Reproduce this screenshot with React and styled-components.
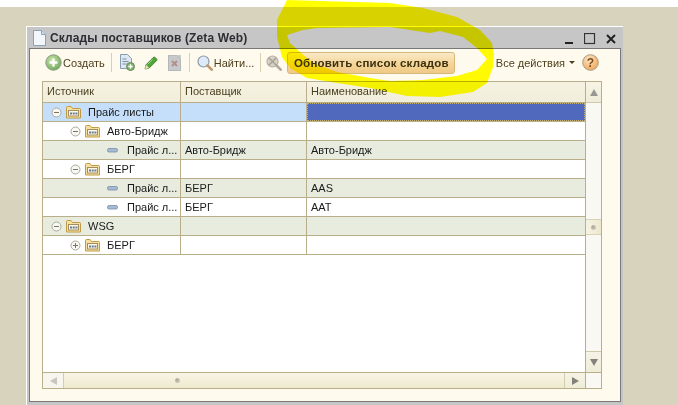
import styled, { createGlobalStyle } from 'styled-components';

const GlobalStyle = createGlobalStyle`
html, body {
    margin: 0;
    padding: 0;
    background: #fff;
}
`

const rows = [
    { level: 0, toggle: 'minus', name: 'Прайс листы', selected: true },
    { level: 1, toggle: 'minus', name: 'Авто-Бридж' },
    { level: 2, name: 'Прайс л...', supplier: 'Авто-Бридж', title: 'Авто-Бридж', alt: true },
    { level: 1, toggle: 'minus', name: 'БЕРГ' },
    { level: 2, name: 'Прайс л...', supplier: 'БЕРГ', title: 'AAS', alt: true },
    { level: 2, name: 'Прайс л...', supplier: 'БЕРГ', title: 'AAT' },
    { level: 0, toggle: 'minus', name: 'WSG', alt: true },
    { level: 1, toggle: 'plus', name: 'БЕРГ' },
]

function Toggle({ kind }) {
    return (
        <svg width="11" height="11" viewBox="0 0 11 11">
            <circle cx="5.5" cy="5.5" r="4.5" fill="#f8f7f2" stroke="#aaaaa0" />
            <path d="M3 5.5h5" stroke="#77776c" />
            {kind === 'plus' && <path d="M5.5 3v5" stroke="#77776c" />}
        </svg>
    )
}

function Folder() {
    return (
        <svg width="15" height="13" viewBox="0 0 15 13">
            <path d="M.5 12V1.5q0-1 1-1h3.5l1.5 2h7q1 0 1 1V12z" fill="#f7dfa0" stroke="#c09a45" />
            <rect x="2.5" y="4.5" width="10" height="5.5" fill="#fdf8e4" stroke="#a08f60" />
            <path d="M4 6.5h2v2H4zM6.7 6.5h2v2h-2zM9.4 6.5h2v2h-2z" fill="#6b7a98" />
        </svg>
    )
}

function Dash() {
    return (
        <svg width="11" height="5" viewBox="0 0 11 5">
            <rect x=".5" y=".5" width="10" height="3.5" rx="1.5" fill="#a5bbd4" stroke="#7a8ea8" strokeWidth=".8" />
        </svg>
    )
}

function PlusBall() {
    return (
        <svg width="17" height="17" viewBox="0 0 17 17">
            <defs>
                <radialGradient id="ball" cx=".4" cy=".35" r=".7">
                    <stop offset="0" stopColor="#c9e6a8" />
                    <stop offset="1" stopColor="#6fa65a" />
                </radialGradient>
            </defs>
            <circle cx="8.5" cy="8.5" r="7.7" fill="url(#ball)" stroke="#8b9a80" />
            <path d="M8.5 4.5v8M4.5 8.5h8" stroke="#fff" strokeWidth="2.4" />
        </svg>
    )
}

function DocPlus() {
    return (
        <svg width="16" height="17" viewBox="0 0 16 17">
            <path d="M1.5.5h7l4 4v10h-11z" fill="#dde8f2" stroke="#8a9cb0" />
            <path d="M3.5 5h4M3.5 7.5h6M3.5 10h4" stroke="#7d90a6" />
            <circle cx="11.5" cy="12.5" r="4" fill="#7fb069" stroke="#6b8a5c" />
            <path d="M11.5 10.3v4.4M9.3 12.5h4.4" stroke="#fff" strokeWidth="1.4" />
        </svg>
    )
}

function Pencil() {
    return (
        <svg width="14" height="14" viewBox="0 0 14 14">
            <path d="M1 13l1-4.2L9.5 1.3q.7-.6 1.4 0l1.8 1.8q.6.7 0 1.4L5.2 12z" fill="#4fa53a" stroke="#2f7a25" strokeWidth=".8" />
            <path d="M1 13l1-4.2L5.2 12z" fill="#f3e3b0" />
            <path d="M3.5 8.5l5-5" stroke="#a8dc90" />
        </svg>
    )
}

function DocCross() {
    return (
        <svg width="13" height="16" viewBox="0 0 13 16">
            <rect width="13" height="16" fill="#c9cbcb" />
            <path d="M.5.5h8l4 4v11H.5z" fill="#c6cacc" stroke="#b5b8b8" />
            <path d="M4 6l5 5M9 6l-5 5" stroke="#b58f8a" strokeWidth="2" />
        </svg>
    )
}

function Magnifier({ muted }) {
    const glass = muted ? '#d7d3c8' : '#dcebf7'
    const edge = muted ? '#b5b0a4' : '#8d99a6'
    const handle = muted ? '#b3a99a' : '#c09a6a'
    return (
        <svg width="16" height="16" viewBox="0 0 16 16">
            <circle cx="6.5" cy="6.5" r="5.5" fill={glass} stroke={edge} strokeWidth="1.2" />
            <path d="M10.5 10.5l4.2 4.2" stroke={handle} strokeWidth="2.6" strokeLinecap="round" />
            {muted && <path d="M3 3l7 7M10 3l-7 7" stroke="#a8a296" strokeWidth="1.6" />}
        </svg>
    )
}

function HelpBall() {
    return (
        <svg width="17" height="17" viewBox="0 0 17 17">
            <defs>
                <radialGradient id="help" cx=".4" cy=".3" r=".8">
                    <stop offset="0" stopColor="#fde6c4" />
                    <stop offset="1" stopColor="#eea04e" />
                </radialGradient>
            </defs>
            <circle cx="8.5" cy="8.5" r="7.8" fill="url(#help)" stroke="#a89a86" />
            <text x="8.5" y="12.6" textAnchor="middle" fontSize="12" fontWeight="700" fontFamily="Liberation Sans, sans-serif" fill="#7a4a1c">?</text>
        </svg>
    )
}

function App() {
    return (
        <Page>
            <GlobalStyle />
            <TopStrip />
            <Window>
                <TitleBar>
                    <svg width="13" height="16" viewBox="0 0 13 16">
                        <path d="M.5.5h8l4 4v11H.5z" fill="#f3f7fb" stroke="#8da2b8" />
                        <path d="M8.5.5v4h4" fill="#d5e1ec" stroke="#8da2b8" />
                    </svg>
                    <Title>Склады поставщиков (Zeta Web)</Title>
                    <WindowControls>
                        <svg width="9" height="3" viewBox="0 0 9 3"><rect width="8" height="2" y="1" fill="#222" /></svg>
                        <svg width="12" height="12" viewBox="0 0 12 12"><rect x=".5" y=".5" width="10" height="10" fill="none" stroke="#333" strokeWidth="1.2" /></svg>
                        <svg width="10" height="10" viewBox="0 0 10 10"><path d="M1 1l8 8M9 1l-8 8" stroke="#222" strokeWidth="2" /></svg>
                    </WindowControls>
                </TitleBar>
                <Client>
                    <Toolbar>
                        <ToolGroup>
                            <PlusBall />
                            <ToolLabel>Создать</ToolLabel>
                        </ToolGroup>
                        <Separator />
                        <IconSlot><DocPlus /></IconSlot>
                        <IconSlot><Pencil /></IconSlot>
                        <IconSlot><DocCross /></IconSlot>
                        <Separator />
                        <ToolGroup>
                            <Magnifier />
                            <ToolLabel>Найти...</ToolLabel>
                        </ToolGroup>
                        <Separator $narrow />
                        <IconSlot><Magnifier muted /></IconSlot>
                        <RefreshButton>Обновить список складов</RefreshButton>
                        <Actions>
                            <ToolLabel>Все действия</ToolLabel>
                            <Caret />
                        </Actions>
                        <HelpBall />
                    </Toolbar>
                    <Table>
                        <Body>
                            <HeaderRow>
                                <HeaderCell>Источник</HeaderCell>
                                <HeaderCell>Поставщик</HeaderCell>
                                <HeaderCell $last>Наименование</HeaderCell>
                            </HeaderRow>
                            {rows.map((row, i) => (
                                <Row key={i} $alt={row.alt} $selected={row.selected}>
                                    <TreeCell $level={row.level}>
                                        {row.toggle ? <Toggle kind={row.toggle} /> : <Dash />}
                                        {row.toggle && <Folder />}
                                        <TreeText $leaf={!row.toggle}>{row.name}</TreeText>
                                    </TreeCell>
                                    <Cell>{row.supplier}</Cell>
                                    {row.selected ? <ActiveCell /> : <Cell $last>{row.title}</Cell>}
                                </Row>
                            ))}
                        </Body>
                        <VScroll>
                            <VButton><ArrowUp /></VButton>
                            <VTrack><VThumb><Dot /></VThumb></VTrack>
                            <VButton $down><ArrowDown /></VButton>
                        </VScroll>
                        <HScroll>
                            <HButton><ArrowLeft /></HButton>
                            <HThumb><Dot /></HThumb>
                            <HButton $end><ArrowRight /></HButton>
                        </HScroll>
                        <Corner />
                    </Table>
                </Client>
            </Window>
            <Scribble width="678" height="405" viewBox="0 0 678 405">
                <path
                    fillRule="evenodd"
                    fill="#ffff00"
                    d="M287 0L390 3L423 8L457 17L480 30L492 43L494 55L493 67L487 83L473 92L440 97L407 96L370 88L337 83L307 78L290 68L282 57L277 37L277 20Z
                       M287 35L290 43L300 52L313 63L337 72L370 78L390 81L423 80L457 76L477 70L487 59L477 48L463 37L440 31L430 33L390 27L317 28L303 30Z"
                />
            </Scribble>
        </Page>
    )
}

export default App

const Page = styled.div`
position: relative;
width: 678px;
height: 405px;
overflow: hidden;
background: #d8d3bc;
font-family: "Liberation Sans", Arial, sans-serif;
font-size: 11px;
`

const TopStrip = styled.div`
height: 7px;
background: #fff;
`

const Scribble = styled.svg`
position: absolute;
left: 0;
top: 0;
mix-blend-mode: multiply;
pointer-events: none;
`

const Window = styled.div`
box-sizing: border-box;
width: 597px;
height: 379px;
margin: 19px 0 0 26px;
padding: 0 2px 3px;
background: #c6c6c6;
border-top: 1px solid #fff;
border-left: 1px solid #fff;
display: flex;
flex-direction: column;
`

const TitleBar = styled.div`
height: 21px;
flex: none;
display: flex;
align-items: center;
padding-left: 4px;
`

const Title = styled.div`
margin-left: 4px;
font-size: 12px;
font-weight: bold;
letter-spacing: .12px;
color: #2d2d33;
`

const WindowControls = styled.div`
margin-left: auto;
display: flex;
align-items: center;
gap: 10px;
padding: 3px 5px 0 0;
& > svg:first-child { margin-top: 7px; }
`

const Client = styled.div`
box-sizing: border-box;
flex: 1;
background: #fffaee;
border: 1px solid #787878;
padding: 0 18px 12px 12px;
display: flex;
flex-direction: column;
`

const Toolbar = styled.div`
height: 32px;
flex: none;
display: flex;
align-items: center;
padding: 0 3px 5px 0;
box-sizing: border-box;
`

const ToolGroup = styled.div`
display: flex;
align-items: center;
gap: 1px;
padding-left: 3px;
margin-right: 5px;
`

const ToolLabel = styled.span`
color: #4d3f1c;
font-size: 11px;
`

const IconSlot = styled.div`
display: flex;
justify-content: center;
width: 22px;
margin-right: 2px;
`

const Separator = styled.div`
width: 1px;
height: 19px;
background: #d9d0b0;
margin: 0 ${p => (p.$narrow ? 2 : 4)}px 0 1px;
`

const RefreshButton = styled.div`
box-sizing: border-box;
width: 168px;
height: 22px;
border: 1px solid #d8b878;
border-radius: 3px;
background: linear-gradient(#fbe9c8, #f4d598 55%, #efc987);
display: flex;
align-items: center;
justify-content: center;
font-weight: bold;
font-size: 11.5px;
letter-spacing: .2px;
color: #3c3010;
`

const Actions = styled.div`
margin-left: auto;
display: flex;
align-items: center;
gap: 4px;
margin-right: 7px;
`

const Caret = styled.div`
width: 0;
height: 0;
border-left: 3px solid transparent;
border-right: 3px solid transparent;
border-top: 3px solid #4d3f1c;
`

const Table = styled.div`
box-sizing: border-box;
width: 560px;
flex: 1;
border: 1px solid #b8ae8a;
background: #fff;
display: grid;
grid-template-columns: 542px 1fr;
grid-template-rows: 1fr 16px;
`

const Body = styled.div`
min-width: 0;
`

const columns = `
display: grid;
grid-template-columns: 138px 126px 1fr;
box-sizing: border-box;
`

const HeaderRow = styled.div`
${columns}
height: 21px;
background: linear-gradient(#f5f2e2, #f1eedb);
border-bottom: 1px solid #b8ae8a;
`

const HeaderCell = styled.div`
box-sizing: border-box;
padding-left: 4px;
line-height: 19px;
color: #4a3f1e;
border-right: ${p => (p.$last ? 'none' : '1px solid #b8ae8a')};
`

const Row = styled.div`
${columns}
height: 19px;
border-bottom: 1px solid #b8ae8a;
color: #1a1a1a;
background: ${p => (p.$selected ? '#c5dffa' : p.$alt ? '#e8ecdf' : '#fff')};
`

const Cell = styled.div`
box-sizing: border-box;
padding-left: 4px;
line-height: 18px;
white-space: nowrap;
overflow: hidden;
border-right: ${p => (p.$last ? 'none' : '1px solid #b8ae8a')};
`

const ActiveCell = styled.div`
background: #5069bd;
outline: 1px dotted #c4b070;
outline-offset: -1px;
`

const TreeCell = styled.div`
box-sizing: border-box;
display: flex;
align-items: center;
gap: 4px;
min-width: 0;
padding-left: ${p => (p.$level === 2 ? 64 : 8 + p.$level * 19)}px;
border-right: 1px solid #b8ae8a;
padding-right: 3px;
& > svg { flex: none; }
`

const TreeText = styled.span`
margin-left: ${p => (p.$leaf ? 5 : 3)}px;
min-width: 0;
white-space: nowrap;
`

const VScroll = styled.div`
grid-row: 1;
grid-column: 2;
border-left: 1px solid #b8ae8a;
background: #f9f8f3;
display: flex;
flex-direction: column;
`

const scrollButton = `
box-sizing: border-box;
flex: none;
display: flex;
align-items: center;
justify-content: center;
background: linear-gradient(#f7f4e6, #efecd8);
`

const VButton = styled.div`
${scrollButton}
height: 21px;
border-${p => (p.$down ? 'top' : 'bottom')}: 1px solid #cfc8aa;
`

const VTrack = styled.div`
flex: 1;
padding-top: 116px;
`

const VThumb = styled.div`
${scrollButton}
height: 16px;
background: linear-gradient(90deg, #f6f3e2, #ece8cf);
border-top: 1px solid #d8d2b8;
border-bottom: 1px solid #d8d2b8;
`

const HScroll = styled.div`
grid-row: 2;
grid-column: 1;
border-top: 1px solid #b8ae8a;
display: flex;
background: #f9f8f3;
`

const HButton = styled.div`
${scrollButton}
width: 21px;
background: ${p => (p.$end ? 'linear-gradient(#f7f4e6, #efecd8)' : '#f7f6ee')};
border-${p => (p.$end ? 'left' : 'right')}: 1px solid #d3ccb0;
`

const HThumb = styled.div`
${scrollButton}
flex: 1;
padding-right: 274px;
background: linear-gradient(#f7f5e6, #efeacd);
`

const Corner = styled.div`
grid-row: 2;
grid-column: 2;
border-top: 1px solid #b8ae8a;
border-left: 1px solid #b8ae8a;
background: #f9f8f3;
`

const Dot = styled.div`
width: 5px;
height: 5px;
border-radius: 50%;
background: radial-gradient(circle at 35% 35%, #aaa79a, #dbd8c8);
`

const ArrowUp = styled.div`
width: 0;
height: 0;
border-left: 4px solid transparent;
border-right: 4px solid transparent;
border-bottom: 7px solid #999791;
`

const ArrowDown = styled.div`
width: 0;
height: 0;
border-left: 4px solid transparent;
border-right: 4px solid transparent;
border-top: 7px solid #84827c;
`

const ArrowLeft = styled.div`
width: 0;
height: 0;
border-top: 4px solid transparent;
border-bottom: 4px solid transparent;
border-right: 7px solid #c9c7bb;
`

const ArrowRight = styled.div`
width: 0;
height: 0;
border-top: 4px solid transparent;
border-bottom: 4px solid transparent;
border-left: 7px solid #84827c;
`
